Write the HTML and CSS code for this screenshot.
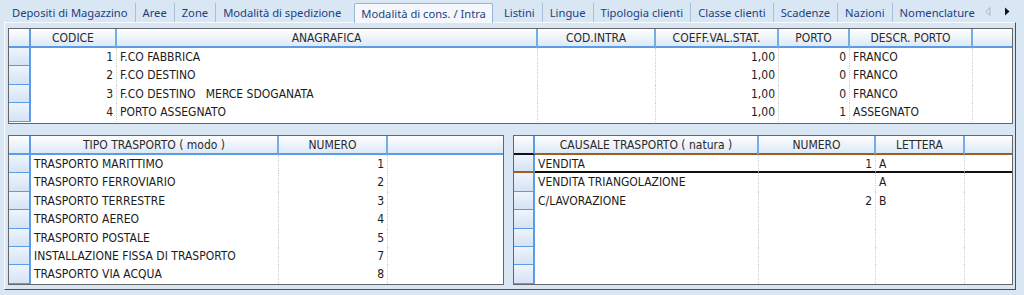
FILE: index.html
```html
<!DOCTYPE html>
<html>
<head>
  <link rel="stylesheet" href="styles.css">
</head>
<body>
  <div class="tabs">
    <div class="tab">Depositi di Magazzino</div>
    <div class="tab">Aree</div>
    <div class="tab">Zone</div>
    <div class="tab">Modalità di spedizione</div>
    <div class="tab active">Modalità di cons. / Intra</div>
    <div class="tab">Listini</div>
    <div class="tab">Lingue</div>
    <div class="tab">Tipologia clienti</div>
    <div class="tab">Classe clienti</div>
    <div class="tab">Scadenze</div>
    <div class="tab">Nazioni</div>
    <div class="tab">Nomenclature</div>
    <div class="tab-arrows">
      <svg width="6" height="9" viewBox="0 0 6 9"><path d="M5 0.5 L0.8 4.5 L5 8.5 Z" fill="none" stroke="#b4b4b4"/></svg>
      <svg width="6" height="9" viewBox="0 0 6 9"><path d="M1 0.5 L5.5 4.5 L1 8.5 Z" fill="#111"/></svg>
    </div>
  </div>

  <div class="panel">
    <div class="grid grid-top">
      <div class="row head">
        <div class="cell ind"></div>
        <div class="cell">CODICE</div>
        <div class="cell">ANAGRAFICA</div>
        <div class="cell">COD.INTRA</div>
        <div class="cell">COEFF.VAL.STAT.</div>
        <div class="cell">PORTO</div>
        <div class="cell">DESCR. PORTO</div>
        <div class="cell"></div>
      </div>
      <div class="row">
        <div class="cell ind"></div>
        <div class="cell num">1</div>
        <div class="cell">F.CO FABBRICA</div>
        <div class="cell"></div>
        <div class="cell num">1,00</div>
        <div class="cell num">0</div>
        <div class="cell">FRANCO</div>
        <div class="cell"></div>
      </div>
      <div class="row">
        <div class="cell ind"></div>
        <div class="cell num">2</div>
        <div class="cell">F.CO DESTINO</div>
        <div class="cell"></div>
        <div class="cell num">1,00</div>
        <div class="cell num">0</div>
        <div class="cell">FRANCO</div>
        <div class="cell"></div>
      </div>
      <div class="row">
        <div class="cell ind"></div>
        <div class="cell num">3</div>
        <div class="cell">F.CO DESTINO   MERCE SDOGANATA</div>
        <div class="cell"></div>
        <div class="cell num">1,00</div>
        <div class="cell num">0</div>
        <div class="cell">FRANCO</div>
        <div class="cell"></div>
      </div>
      <div class="row">
        <div class="cell ind"></div>
        <div class="cell num">4</div>
        <div class="cell">PORTO ASSEGNATO</div>
        <div class="cell"></div>
        <div class="cell num">1,00</div>
        <div class="cell num">1</div>
        <div class="cell">ASSEGNATO</div>
        <div class="cell"></div>
      </div>
    </div>

    <div class="bottom">
      <div class="grid grid-mode">
        <div class="row head">
          <div class="cell ind"></div>
          <div class="cell">TIPO TRASPORTO ( modo )</div>
          <div class="cell">NUMERO</div>
          <div class="cell"></div>
        </div>
        <div class="row"><div class="cell ind"></div><div class="cell">TRASPORTO MARITTIMO</div><div class="cell num">1</div><div class="cell"></div></div>
        <div class="row"><div class="cell ind"></div><div class="cell">TRASPORTO FERROVIARIO</div><div class="cell num">2</div><div class="cell"></div></div>
        <div class="row"><div class="cell ind"></div><div class="cell">TRASPORTO TERRESTRE</div><div class="cell num">3</div><div class="cell"></div></div>
        <div class="row"><div class="cell ind"></div><div class="cell">TRASPORTO AEREO</div><div class="cell num">4</div><div class="cell"></div></div>
        <div class="row"><div class="cell ind"></div><div class="cell">TRASPORTO POSTALE</div><div class="cell num">5</div><div class="cell"></div></div>
        <div class="row"><div class="cell ind"></div><div class="cell">INSTALLAZIONE FISSA DI TRASPORTO</div><div class="cell num">7</div><div class="cell"></div></div>
        <div class="row"><div class="cell ind"></div><div class="cell">TRASPORTO VIA ACQUA</div><div class="cell num">8</div><div class="cell"></div></div>
      </div>

      <div class="grid grid-nature">
        <div class="row head">
          <div class="cell ind"></div>
          <div class="cell">CAUSALE TRASPORTO ( natura )</div>
          <div class="cell">NUMERO</div>
          <div class="cell">LETTERA</div>
          <div class="cell"></div>
        </div>
        <div class="row sel"><div class="cell ind"></div><div class="cell">VENDITA</div><div class="cell num">1</div><div class="cell">A</div><div class="cell"></div></div>
        <div class="row"><div class="cell ind"></div><div class="cell">VENDITA TRIANGOLAZIONE</div><div class="cell num"></div><div class="cell">A</div><div class="cell"></div></div>
        <div class="row"><div class="cell ind"></div><div class="cell">C/LAVORAZIONE</div><div class="cell num">2</div><div class="cell">B</div><div class="cell"></div></div>
        <div class="row"><div class="cell ind"></div><div class="cell"></div><div class="cell"></div><div class="cell"></div><div class="cell"></div></div>
        <div class="row"><div class="cell ind"></div><div class="cell"></div><div class="cell"></div><div class="cell"></div><div class="cell"></div></div>
        <div class="row"><div class="cell ind"></div><div class="cell"></div><div class="cell"></div><div class="cell"></div><div class="cell"></div></div>
        <div class="row"><div class="cell ind"></div><div class="cell"></div><div class="cell"></div><div class="cell"></div><div class="cell"></div></div>
      </div>
    </div>
  </div>
</body>
</html>
```

FILE: styles.css
```css
:root {
  --background: #d9e6f4;
  --tab-text: #1c3f7e;
  --tab-sep: #a9bfda;
  --head-line: #5c9ce6;
  --grid-border: #666666;
  --cell-line: #cfcfcf;
  --sel-top: #9b5e1f;
  --sel-bottom: #111111;
}

* {
  box-sizing: border-box;
}

body {
  margin: 0;
  width: 1024px;
  height: 295px;
  overflow: hidden;
  background: var(--background);
  font-family: "Noto Sans", sans-serif;
}

/* tab strip */

.tabs {
  display: flex;
  height: 22px;
  padding: 3px 0 0 5px;
  font-size: 11.2px;
  color: var(--tab-text);
}

.tab {
  flex-shrink: 0;
  height: 19px;
  padding: 0 7px;
  line-height: 20px;
  white-space: nowrap;
}

.tab + .tab {
  border-left: 1px solid var(--tab-sep);
}

.tab.active,
.tab.active + .tab {
  border-left: none;
}

.tab.active {
  position: relative;
  z-index: 1;
  height: 20px;
  margin: 0 2px 0 6px;
  padding: 0 6px;
  line-height: 19px;
  background: #f4f8fd;
  border: 1px solid #9ab4d6;
  border-bottom: none;
  border-radius: 2px 2px 0 0;
}

.tab.active + .tab {
  padding-left: 9px;
}

.tab-arrows {
  display: flex;
  flex-shrink: 0;
  align-items: center;
  gap: 13px;
  margin-left: auto;
  padding: 0 14px 3px 0;
}

/* tab page */

.panel {
  margin: 0 8px 0 4px;
  padding: 5px 2px 4px 3px;
  border: 1px solid;
  border-color: #f7fbff #4f4f4f #4f4f4f #f7fbff;
}

.bottom {
  display: flex;
  gap: 9px;
  margin-top: 11px;
}

/* grids */

.grid {
  overflow: hidden;
  background: #ffffff;
  border: 1px solid var(--grid-border);
  font-family: "DejaVu Sans Condensed", "DejaVu Sans", sans-serif;
  font-stretch: condensed;
  font-size: 12px;
  color: #1b1b1b;
}

.grid-top {
  height: 96px;
  --cols: 22px 86px 421px 118px 123px 71px 123px 1fr;
}

.grid-mode {
  width: 496px;
  height: 150px;
  --cols: 22px 248px 109px 1fr;
}

.grid-nature {
  flex: 1;
  height: 150px;
  --cols: 21px 224px 117px 89px 1fr;
}

.row {
  display: grid;
  grid-template-columns: var(--cols);
  height: 18.4px;
}

.cell {
  overflow: hidden;
  padding: 0 3px;
  line-height: 18px;
  white-space: pre;
  border-right: 1px dotted var(--cell-line);
}

.cell:last-child {
  border-right: none;
}

.num {
  text-align: right;
}

.ind {
  background: linear-gradient(#eef4fc, #d5e3f5);
  border-right: 2px solid var(--head-line);
  border-bottom: 1px solid var(--head-line);
}

.head {
  height: 19px;
}

.head .cell {
  padding-top: 1px;
  line-height: 16px;
  text-align: center;
  color: #2a2a2a;
  background: linear-gradient(#fefeff, #dde9f7);
  border-right: 2px solid #74acea;
  border-bottom: 2px solid var(--head-line);
}

.head .cell.ind {
  border-right-color: var(--head-line);
}

.head .cell:last-child {
  border-right: none;
}

/* focused row */

.grid-nature .head .cell {
  border-bottom-color: var(--sel-top);
}

.grid-nature .head .cell.ind {
  border-bottom-color: var(--sel-bottom);
}

.row.sel .cell {
  border-bottom: 2px solid var(--sel-bottom);
}

.row.sel .cell.ind {
  border-bottom-color: var(--sel-top);
}
```
